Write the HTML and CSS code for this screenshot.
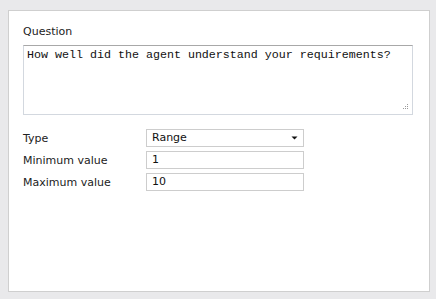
FILE: index.html
```html
<!DOCTYPE html>
<html>
<head>
<meta charset="utf-8">
<link rel="stylesheet" href="styles.css">
</head>
<body>
<div class="panel">
  <div class="field-label">Question</div>
  <div class="textarea-wrap">
    <div class="textarea">How well did the agent understand your requirements?</div>
    <svg class="grip" width="7" height="7" viewBox="0 0 7 7">
      <rect x="5" y="0" width="1" height="1" fill="#9a9a9a"/>
      <rect x="3" y="2" width="1" height="1" fill="#9a9a9a"/>
      <rect x="5" y="2" width="1" height="1" fill="#9a9a9a"/>
      <rect x="1" y="4" width="1" height="1" fill="#9a9a9a"/>
      <rect x="3" y="4" width="1" height="1" fill="#9a9a9a"/>
      <rect x="5" y="4" width="1" height="1" fill="#9a9a9a"/>
    </svg>
  </div>
  <div class="form-grid">
    <div class="label">Type</div>
    <div class="select">
      <span>Range</span>
      <svg class="caret" width="7" height="4" viewBox="0 0 7 4"><path d="M0.5 0.5H6.5L3.5 3.5Z" fill="#111"/></svg>
    </div>
    <div class="label">Minimum value</div>
    <div class="input">1</div>
    <div class="label">Maximum value</div>
    <div class="input">10</div>
  </div>
</div>
</body>
</html>
```
FILE: styles.css
```css
html, body {
  margin: 0;
  padding: 0;
  background: #e9e9eb;
  font-family: "DejaVu Sans", Verdana, sans-serif;
  font-size: 11px;
  color: #222;
}
body {
  padding: 10px 6px 7px 8px;
  height: 299px;
  box-sizing: border-box;
}
.panel {
  background: #fff;
  border: 1px solid #cfcfcf;
  height: 100%;
  box-sizing: border-box;
  padding: 14px 16px 0 14px;
}
.field-label {
  line-height: 13px;
  margin-bottom: 7px;
}
.textarea-wrap {
  position: relative;
  height: 70px;
  box-sizing: border-box;
  border: 1px solid #d3d8df;
  border-top-color: #a8a8a8;
}
.textarea {
  font-family: "Liberation Mono", "Courier New", monospace;
  font-size: 11.67px;
  line-height: 13px;
  color: #111;
  padding: 3px 3px;
}
.grip {
  position: absolute;
  right: 3px;
  bottom: 3px;
}
.form-grid {
  display: grid;
  grid-template-columns: 123px 158px;
  row-gap: 4px;
  margin-top: 14px;
  align-items: center;
}
.label {
  line-height: 13px;
}
.select, .input {
  height: 18px;
  box-sizing: border-box;
  border: 1px solid #cdcdcd;
  padding: 0 5px;
  line-height: 16px;
  color: #111;
}
.select {
  display: flex;
  justify-content: space-between;
  align-items: center;
  padding-right: 5px;
}
```
